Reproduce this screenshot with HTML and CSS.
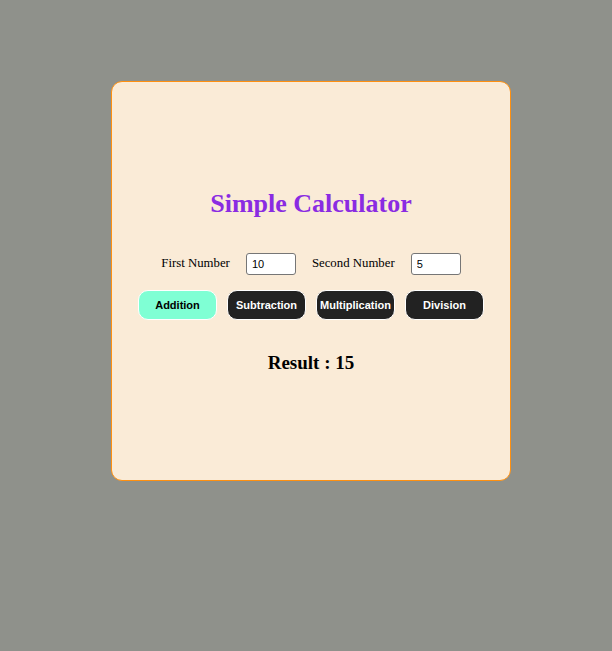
FILE: index.html
```html
<!DOCTYPE html>
<html>
<head>
<meta charset="utf-8">
<link rel="stylesheet" href="styles.css">
</head>
<body>
<div class="card">
  <h1 class="title">Simple Calculator</h1>
  <div class="inputs">
    <label class="lbl">First Number</label>
    <input class="num" type="text" value="10">
    <label class="lbl">Second Number</label>
    <input class="num" type="text" value="5">
  </div>
  <div class="buttons">
    <button class="btn active">Addition</button>
    <button class="btn">Subtraction</button>
    <button class="btn">Multiplication</button>
    <button class="btn">Division</button>
  </div>
  <div class="result">Result : 15</div>
</div>
</body>
</html>
```
FILE: styles.css
```css
html, body {
  margin: 0;
  padding: 0;
  background: #8f918b;
}
body {
  padding: 81px 0 0 111px;
  font-family: "Liberation Serif", serif;
}
.card {
  box-sizing: border-box;
  width: 400px;
  height: 400px;
  background: #faebd7;
  border: 1px solid #ff9010;
  border-radius: 11px;
  display: flex;
  flex-direction: column;
  align-items: center;
  justify-content: center;
}
.title {
  margin: 0;
  color: #8a2be2;
  font-size: 26px;
  font-weight: bold;
  line-height: 30px;
}
.inputs {
  margin-top: 34px;
  display: flex;
  align-items: center;
  font-size: 12.8px;
}
.lbl {
  margin-right: 16px;
}
.num {
  box-sizing: border-box;
  width: 50px;
  height: 22px;
  border: 1px solid #767676;
  border-radius: 3px;
  background: #fff;
  font-family: "Liberation Sans", sans-serif;
  font-size: 11px;
  padding: 1px 5px;
  margin-right: 16px;
}
.num:last-child {
  margin-right: 0;
}
.buttons {
  margin-top: 15px;
  display: flex;
  gap: 10px;
}
.btn {
  box-sizing: border-box;
  width: 79px;
  height: 30px;
  border: 1px solid #fff;
  border-radius: 10px;
  background: #222;
  color: #fff;
  font-family: "Liberation Sans", sans-serif;
  font-weight: bold;
  font-size: 11px;
  padding: 0;
  white-space: nowrap;
}
.btn.active {
  background: #7fffd4;
  color: #000;
}
.result {
  margin-top: 32px;
  font-size: 19px;
  font-weight: bold;
}
```
